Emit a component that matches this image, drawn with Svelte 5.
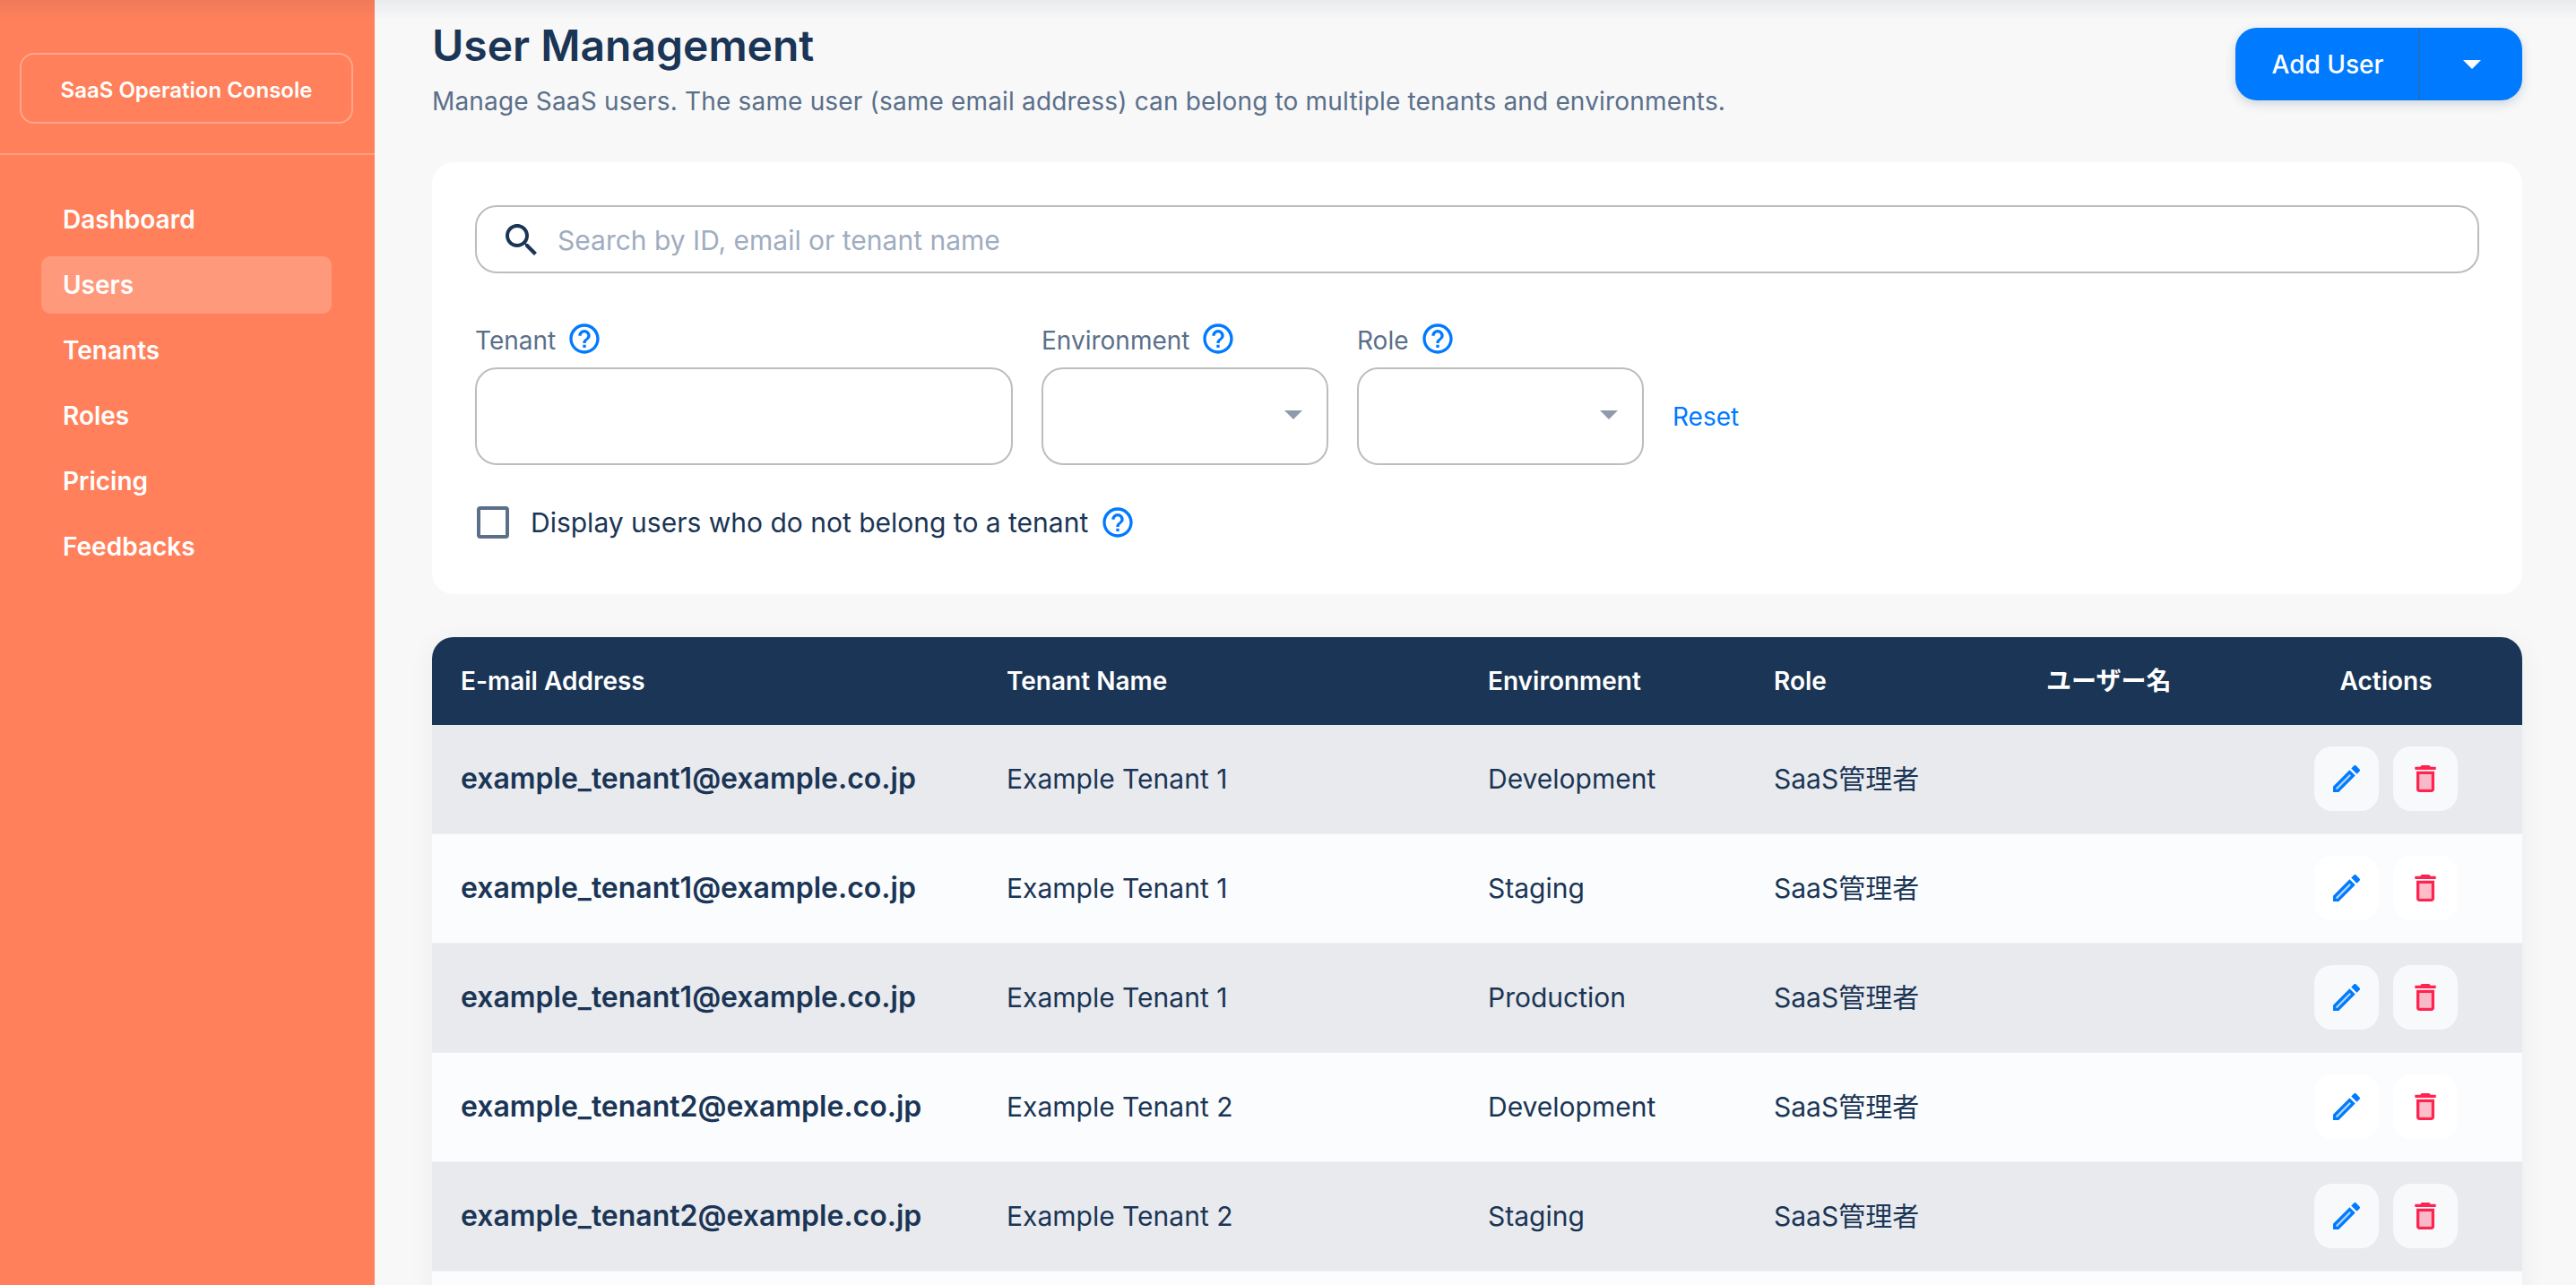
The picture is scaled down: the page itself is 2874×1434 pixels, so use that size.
<script lang="ts">
  const navItems = ['Dashboard', 'Users', 'Tenants', 'Roles', 'Pricing', 'Feedbacks'];
  const activeNav = 'Users';

  const rows = [
    { email: 'example_tenant1@example.co.jp', tenant: 'Example Tenant 1', env: 'Development' },
    { email: 'example_tenant1@example.co.jp', tenant: 'Example Tenant 1', env: 'Staging' },
    { email: 'example_tenant1@example.co.jp', tenant: 'Example Tenant 1', env: 'Production' },
    { email: 'example_tenant2@example.co.jp', tenant: 'Example Tenant 2', env: 'Development' },
    { email: 'example_tenant2@example.co.jp', tenant: 'Example Tenant 2', env: 'Staging' }
  ];
</script>

{#snippet help()}
  <svg class="help" viewBox="0 0 24 24" aria-hidden="true">
    <path d="M11 18h2v-2h-2v2zm1-16C6.48 2 2 6.48 2 12s4.48 10 10 10 10-4.48 10-10S17.52 2 12 2zm0 18c-4.41 0-8-3.59-8-8s3.59-8 8-8 8 3.59 8 8-3.59 8-8 8zm0-14c-2.21 0-4 1.79-4 4h2c0-1.1.9-2 2-2s2 .9 2 2c0 2-3 1.75-3 5h2c0-2.25 3-2.5 3-5 0-2.21-1.79-4-4-4z" />
  </svg>
{/snippet}

<div class="layout">
  <div class="top-shade"></div>

  <aside class="sidebar">
    <div class="brand">
      <div class="logo">SaaS Operation Console</div>
    </div>
    <nav class="nav">
      {#each navItems as item}
        <a class="nav-item" class:active={item === activeNav} href="#top">{item}</a>
      {/each}
    </nav>
  </aside>

  <main class="main">
    <header class="page-head">
      <div>
        <h1>User Management</h1>
        <p>Manage SaaS users. The same user (same email address) can belong to multiple tenants and environments.</p>
      </div>
      <div class="split-button">
        <button type="button" class="add">Add User</button>
        <button type="button" class="more" aria-label="More"><span class="caret"></span></button>
      </div>
    </header>

    <section class="filters">
      <div class="search">
        <svg viewBox="0 0 24 24" aria-hidden="true">
          <path d="M15.5 14h-.79l-.28-.27C15.41 12.59 16 11.11 16 9.5 16 5.91 13.09 3 9.5 3S3 5.91 3 9.5 5.91 16 9.5 16c1.61 0 3.09-.59 4.23-1.57l.27.28v.79l5 4.99L20.49 19l-4.99-5zm-6 0C7.01 14 5 11.99 5 9.5S7.01 5 9.5 5 14 7.01 14 9.5 11.99 14 9.5 14z" />
        </svg>
        <input type="text" placeholder="Search by ID, email or tenant name" />
      </div>

      <div class="fields">
        <div class="field tenant">
          <div class="label"><span>Tenant</span> {@render help()}</div>
          <div class="control"></div>
        </div>
        <div class="field select">
          <div class="label"><span>Environment</span> {@render help()}</div>
          <div class="control"><span class="caret"></span></div>
        </div>
        <div class="field select">
          <div class="label"><span>Role</span> {@render help()}</div>
          <div class="control"><span class="caret"></span></div>
        </div>
        <button type="button" class="reset">Reset</button>
      </div>

      <div class="orphan">
        <span class="checkbox"></span>
        <span>Display users who do not belong to a tenant</span>
        {@render help()}
      </div>
    </section>

    <table class="users">
      <colgroup>
        <col style="width: 609px" />
        <col style="width: 537px" />
        <col style="width: 319px" />
        <col style="width: 304px" />
        <col style="width: 259px" />
        <col style="width: 304px" />
      </colgroup>
      <thead>
        <tr>
          <th>E-mail Address</th>
          <th>Tenant Name</th>
          <th>Environment</th>
          <th>Role</th>
          <th>ユーザー名</th>
          <th class="center">Actions</th>
        </tr>
      </thead>
      <tbody>
        {#each rows as row}
          <tr>
            <td class="email">{row.email}</td>
            <td>{row.tenant}</td>
            <td>{row.env}</td>
            <td>SaaS管理者</td>
            <td></td>
            <td>
              <div class="actions">
                <button type="button" class="icon-button edit" aria-label="Edit">
                  <svg viewBox="0 0 24 24">
                    <path opacity=".3" d="M5 18.08V19h.92l9.06-9.06-.92-.92z" />
                    <path d="M20.71 7.04c.39-.39.39-1.02 0-1.41l-2.34-2.34c-.2-.2-.45-.29-.71-.29s-.51.1-.7.29l-1.83 1.83 3.75 3.75 1.83-1.83zM3 17.25V21h3.75L17.81 9.94l-3.75-3.75L3 17.25zM5.92 19H5v-.92l9.06-9.06.92.92L5.92 19z" />
                  </svg>
                </button>
                <button type="button" class="icon-button delete" aria-label="Delete">
                  <svg viewBox="0 0 24 24">
                    <path opacity=".3" d="M8 9h8v10H8z" />
                    <path d="M15.5 4l-1-1h-5l-1 1H5v2h14V4zM6 19c0 1.1.9 2 2 2h8c1.1 0 2-.9 2-2V7H6v12zM8 9h8v10H8V9z" />
                  </svg>
                </button>
              </div>
            </td>
          </tr>
        {/each}
        <!-- next row starts just above the fold, its content is out of view -->
        <tr><td colspan="6"></td></tr>
      </tbody>
    </table>
  </main>
</div>

<style>
  :global(body) {
    margin: 0;
    overflow: hidden;
    background: #f8f8f8;
    font-family: Inter, 'Noto Sans CJK JP', sans-serif;
    color: #1a3555;
  }

  .layout {
    position: relative;
    display: flex;
    height: 1434px;
    overflow: hidden;
  }

  /* app bar shadow bleeding in from above the viewport */
  .top-shade {
    position: absolute;
    inset: 0 0 auto 0;
    height: 22px;
    background: linear-gradient(rgba(26, 53, 85, 0.07), rgba(26, 53, 85, 0));
    pointer-events: none;
    z-index: 1;
  }

  .sidebar {
    flex: 0 0 418px;
    background: #ff805a;
    color: #fff;
  }

  .brand {
    padding: 59px 24px 33px 22px;
    border-bottom: 2px solid rgba(255, 255, 255, 0.25);
  }

  .logo {
    height: 79px;
    box-sizing: border-box;
    padding-top: 4px;
    border: 2px solid rgba(255, 255, 255, 0.3);
    border-radius: 16px;
    display: flex;
    align-items: center;
    justify-content: center;
    font-size: 24px;
    font-weight: 600;
  }

  .nav {
    display: flex;
    flex-direction: column;
    gap: 9px;
    padding: 40px 48px 0 46px;
  }

  .nav-item {
    height: 64px;
    padding-left: 24px;
    display: flex;
    align-items: center;
    border-radius: 10px;
    color: #fff;
    text-decoration: none;
    font-size: 28px;
    font-weight: 600;
  }

  .nav-item.active {
    background: rgba(255, 255, 255, 0.2);
  }

  .main {
    flex: 1;
    min-width: 0;
    padding: 0 60px 0 64px;
  }

  .page-head {
    display: flex;
    justify-content: space-between;
    align-items: flex-start;
    margin-bottom: 48px;
  }

  h1 {
    margin: 15px 0 6px;
    font-size: 48px;
    line-height: 72px;
    font-weight: 600;
  }

  .page-head p {
    margin: 0;
    font-size: 28px;
    line-height: 40px;
    letter-spacing: 0.17px;
    color: #5a6f8a;
  }

  .split-button {
    margin-top: 31px;
    height: 81px;
    width: 320px;
    display: flex;
    background: #007aff;
    border-radius: 24px;
    box-shadow: 0 4px 12px rgba(26, 53, 85, 0.18);
  }

  .split-button button {
    border: none;
    background: none;
    color: #fff;
    font: inherit;
    cursor: pointer;
    padding: 0;
  }

  .add {
    width: 206px;
    padding-left: 2px !important;
    border-right: 2px solid #1a6fc9 !important;
    font-size: 28px !important;
    font-weight: 500 !important;
  }

  .more {
    flex: 1;
    padding-left: 2px !important;
    display: flex;
    align-items: center;
    justify-content: center;
  }

  .caret {
    display: block;
    width: 0;
    height: 0;
    border-left: 10px solid transparent;
    border-right: 10px solid transparent;
    border-top: 10px solid currentColor;
  }

  .filters {
    background: #fff;
    border-radius: 24px;
    padding: 48px 48px 60px;
    margin-bottom: 48px;
  }

  .search {
    height: 76px;
    box-sizing: border-box;
    border: 2px solid #bdbdbd;
    border-radius: 24px;
    display: flex;
    align-items: center;
    padding: 2px 0 0 26px;
    gap: 16px;
    margin-bottom: 53px;
  }

  .search svg {
    width: 48px;
    height: 48px;
    fill: #1a3555;
    flex: none;
  }

  .search input {
    flex: 1;
    border: none;
    outline: none;
    background: none;
    font: inherit;
    font-size: 30px;
    color: #1a3555;
    padding: 0;
  }

  .search input::placeholder {
    color: #9fadbf;
    opacity: 1;
  }

  .fields {
    display: flex;
    align-items: flex-end;
    gap: 32px;
  }

  .field.tenant {
    width: 600px;
  }

  .field.select {
    width: 320px;
  }

  .label {
    display: flex;
    align-items: center;
    gap: 12px;
    height: 40px;
    margin-bottom: 12px;
    font-size: 28px;
    color: #5a6f8a;
  }

  .label span {
    padding-top: 4px;
  }

  .help {
    width: 40px;
    height: 40px;
    fill: #007aff;
    flex: none;
  }

  .control {
    height: 109px;
    box-sizing: border-box;
    border: 2px solid #bdbdbd;
    border-radius: 24px;
    display: flex;
    align-items: center;
    justify-content: flex-end;
    padding: 0 27px 4px 0;
    color: #8f9bab;
  }

  .reset {
    height: 109px;
    border: none;
    background: none;
    padding: 0;
    font: inherit;
    font-size: 28px;
    color: #007aff;
    cursor: pointer;
  }

  .orphan {
    display: flex;
    align-items: center;
    height: 40px;
    margin-top: 44px;
    font-size: 30px;
    gap: 13px;
  }

  .checkbox {
    width: 36px;
    height: 36px;
    box-sizing: border-box;
    border: 4px solid #5a6f8a;
    border-radius: 4px;
    margin: 0 11px 0 2px;
  }

  .users {
    width: 100%;
    table-layout: fixed;
    border-collapse: separate;
    border-spacing: 0;
    box-shadow: 0 6px 30px rgba(26, 53, 85, 0.06);
    border-radius: 24px 24px 0 0;
  }

  th {
    height: 98px;
    padding: 0 0 0 32px;
    line-height: 40px;
    text-align: left;
    background: #1a3555;
    color: #fff;
    font-size: 28px;
    font-weight: 600;
  }

  th:first-child {
    border-top-left-radius: 24px;
  }

  th:last-child {
    border-top-right-radius: 24px;
  }

  th.center {
    padding: 0;
    text-align: center;
  }

  td {
    height: 122px;
    box-sizing: border-box;
    padding: 0 0 1px 32px;
    border-bottom: 1px solid #eef0f3;
    line-height: 40px;
    font-size: 30px;
  }

  tbody tr:nth-child(odd) td {
    background: #e9eaee;
  }

  tbody tr:nth-child(even) td {
    background: #fbfcfe;
  }

  td.email {
    font-size: 32px;
    font-weight: 600;
  }

  .actions {
    display: flex;
    justify-content: center;
    gap: 16px;
    margin-left: -32px;
  }

  .icon-button {
    width: 72px;
    height: 72px;
    border: none;
    border-radius: 20px;
    padding: 0;
    display: flex;
    align-items: center;
    justify-content: center;
    cursor: pointer;
    background: #fff;
  }

  tbody tr:nth-child(odd) .icon-button {
    background: #f7f9fb;
  }

  .icon-button svg {
    width: 40px;
    height: 40px;
  }

  .edit svg {
    fill: #007aff;
  }

  .delete svg {
    fill: #ff2350;
  }
</style>
